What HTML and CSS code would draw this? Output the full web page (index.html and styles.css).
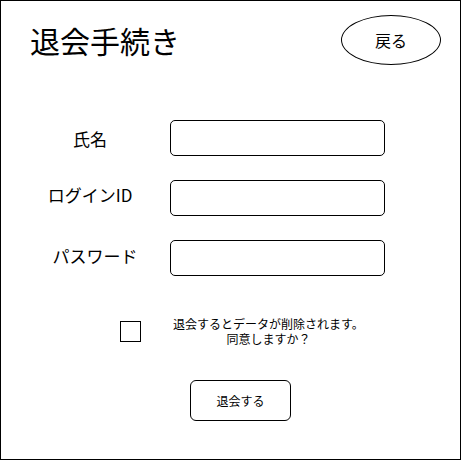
FILE: index.html
```html
<!DOCTYPE html>
<html lang="ja">
<head>
<meta charset="utf-8" />
<title>退会手続き</title>
<link rel="stylesheet" href="styles.css">
</head>
<body>
<div class="frame">
    <div class="header">
        <h1 class="title">退会手続き</h1>
        <div class="back">戻る</div>
    </div>
    <div class="form">
        <div class="row">
            <span class="label">氏名</span>
            <div class="field"></div>
        </div>
        <div class="row">
            <span class="label label-id">ログインID</span>
            <div class="field"></div>
        </div>
        <div class="row">
            <span class="label label-pw">パスワード</span>
            <div class="field"></div>
        </div>
    </div>
    <div class="agree">
        <span class="check"></span>
        <p class="notice">退会するとデータが削除されます。<br />同意しますか？</p>
    </div>
    <div class="submit">退会する</div>
</div>
</body>
</html>
```

FILE: styles.css
```css
*{ margin:0; padding:0; box-sizing:border-box;}
body{ font-family:"Noto Sans CJK JP", "Liberation Sans", sans-serif; color:#000; background:#fff;}
.frame{ width:461px; height:460px; border:1px solid #000; display:flex; flex-direction:column;}
.header{ display:flex; justify-content:space-between; align-items:center; padding:14px 19px 0 29px;}
.title{ font-size:30px; font-weight:normal; line-height:1;}
.back{ width:100px; height:50px; border:1px solid #000; border-radius:50%; display:flex; align-items:center; justify-content:center; font-size:16px;}
.form{ display:flex; flex-direction:column; gap:24px; margin-top:55px;}
.row{ display:flex; align-items:center; gap:20px; padding-left:29px;}
.label{ width:120px; text-align:center; font-size:17px; line-height:1;}
.label-id{ padding-bottom:8px;}
.label-pw{ padding:0 0 6px 10px;}
.field{ width:215px; height:36px; border:1px solid #000; border-radius:5px;}
.agree{ display:flex; align-items:center; gap:32px; padding-left:119px; margin-top:40px;}
.check{ width:21px; height:21px; border:1px solid #000;}
.notice{ font-size:12px; line-height:15px; text-align:center;}
.submit{ width:101px; height:41px; margin:34px 0 0 189px; border:1px solid #000; border-radius:6px; display:flex; align-items:center; justify-content:center; font-size:12px;}
```
